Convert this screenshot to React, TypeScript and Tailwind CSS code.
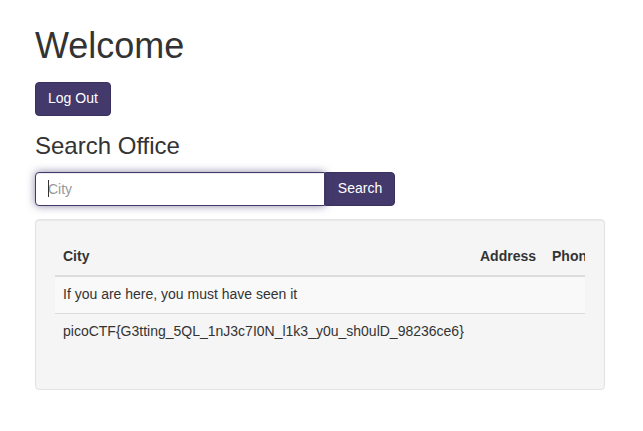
import React from 'react';

const rows = [
  { city: "If you are here, you must have seen it", address: "", phone: "" },
  { city: "picoCTF{G3tting_5QL_1nJ3c7I0N_l1k3_y0u_sh0ulD_98236ce6}", address: "", phone: "" },
];

const App = () => {
  return (
    <div className="min-h-screen bg-white text-[#333] text-[14px] leading-[20px] font-['Liberation_Sans',Arial,sans-serif]">
      <div className="pl-[35px] pt-[26px] w-[605px]">
        <h1 className="text-[36px] leading-[40px] font-normal">Welcome</h1>

        <button className="mt-[16px] block pt-[5px] pb-[7px] px-[12px] leading-[20px] rounded-[4px] bg-[#433a6b] border border-[#3a325e] text-white text-[14px]">
          Log Out
        </button>

        <h3 className="mt-[17px] text-[24px] leading-[26px] font-normal">Search Office</h3>

        <div className="mt-[13px] flex">
          <div className="relative">
            <input
              type="text"
              placeholder="City"
              className="w-[290px] h-[34px] px-[12px] pb-[1px] rounded-l-[4px] border border-[#433a6b] bg-white text-[14px] placeholder:text-[#999] outline-none shadow-[inset_0_1px_1px_rgba(0,0,0,0.075),0_0_8px_rgba(67,58,107,0.6)]"
            />
            <span className="absolute left-[13px] top-[8px] w-px h-[17px] bg-[#333]" />
          </div>
          <button className="w-[70px] h-[34px] pb-[2px] rounded-r-[4px] bg-[#433a6b] border border-[#3a325e] text-white text-[14px]">
            Search
          </button>
        </div>

        <div className="mt-[13px] p-[19px] bg-[#f5f5f5] border border-[#e3e3e3] rounded-[4px] shadow-[inset_0_1px_1px_rgba(0,0,0,0.05)]">
          <div className="w-[530px] overflow-hidden mb-[20px]">
            <div className="w-[552px]">
              <div className="grid grid-cols-[417px_72px_63px] border-b-2 border-[#ddd] font-bold">
                <div className="px-[8px] pt-[7px] pb-[9px]">City</div>
                <div className="px-[8px] pt-[7px] pb-[9px]">Address</div>
                <div className="px-[8px] pt-[7px] pb-[9px]">Phone</div>
              </div>
              {rows.map((row, i) => (
                <div
                  key={i}
                  className={`grid grid-cols-[417px_72px_63px] ${i === 0 ? 'bg-[#f9f9f9] border-b border-[#ddd]' : ''}`}
                >
                  <div className="px-[8px] pt-[7px] pb-[9px] whitespace-nowrap">{row.city}</div>
                  <div className="px-[8px] pt-[7px] pb-[9px]">{row.address}</div>
                  <div className="px-[8px] pt-[7px] pb-[9px]">{row.phone}</div>
                </div>
              ))}
            </div>
          </div>
        </div>
      </div>
    </div>
  );
};

export default App;
